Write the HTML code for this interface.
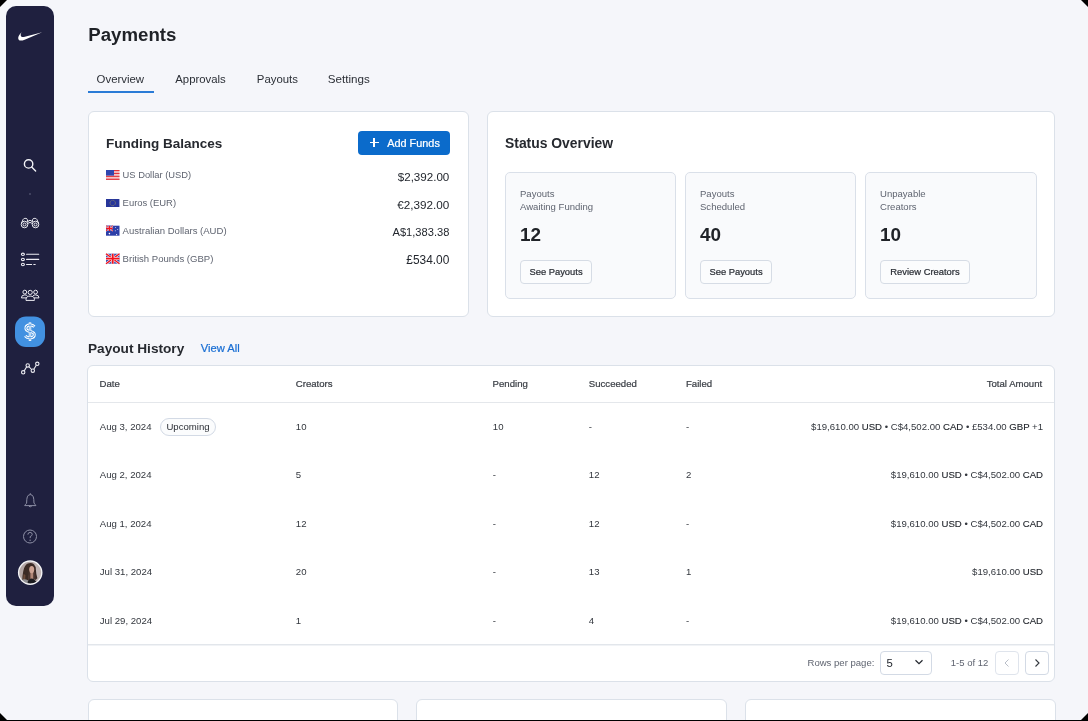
<!DOCTYPE html>
<html><head><meta charset="utf-8">
<style>
*{box-sizing:border-box;margin:0;padding:0}
html,body{width:1088px;height:721px;background:#000;overflow:hidden}
body{font-family:"Liberation Sans",sans-serif;color:#1f2328}
#page{will-change:transform;position:absolute;left:0;top:0;width:1088px;height:720px;background:#f5f6fa;overflow:hidden;clip-path:polygon(7px 0,1081px 0,1088px 7px,1088px 713px,1081px 720px,7px 720px,0 713px,0 7px)}
.abs{position:absolute}
.t{position:absolute;white-space:nowrap;line-height:1}
.t b{font-weight:700}
#side{position:absolute;left:6px;top:6px;width:48px;height:600px;background:#1f203f;border-radius:10px}
.card{position:absolute;background:#fff;border:1px solid #dbe1e9;border-radius:6px}
.sub{position:absolute;background:#f9fafc;border:1px solid #dae0e9;border-radius:5px;width:171px;height:127px;top:172px}
.btn2{position:absolute;background:#fff;border:1px solid #d6dce5;border-radius:4px;height:24px}
</style></head><body>
<div id="page">
<div id="side"></div>
<svg class="abs" style="left:0;top:0" width="60" height="610" viewBox="0 0 60 610">
<g transform="translate(18.2,24.4)"><path fill="#fff" d="M24 7.8L6.442 15.276c-1.456.616-2.679.925-3.668.925-1.12 0-1.933-.392-2.437-1.177-.317-.504-.41-1.143-.28-1.918.13-.775.476-1.6 1.036-2.478.467-.71 1.232-1.643 2.297-2.8a6.122 6.122 0 00-.784 1.848c-.28 1.195-.028 2.072.756 2.632.373.261.886.392 1.54.392.522 0 1.11-.084 1.764-.252L24 7.8z"/></g>
<g fill="none" stroke="#f2f2f6" stroke-width="1.4" stroke-linecap="round">
<circle cx="28.6" cy="163.9" r="4.2"/>
<path d="M31.7 167 L35.6 170.9"/>
</g>
<circle cx="30" cy="194" r="1" fill="#4b4d6a"/>
<g fill="none" stroke="#ececf2" stroke-width="1">
<circle cx="24.5" cy="224.5" r="3.3"/><circle cx="24.5" cy="224.5" r="1.5"/>
<circle cx="35.5" cy="224.5" r="3.3"/><circle cx="35.5" cy="224.5" r="1.5"/>
<path d="M21.4 223.3 L23.2 219.3 Q23.7 218.4 24.8 218.4 L25.9 218.4 Q27.1 218.5 27.4 219.6 L27.8 222"/>
<path d="M38.6 223.3 L36.8 219.3 Q36.3 218.4 35.2 218.4 L34.1 218.4 Q32.9 218.5 32.6 219.6 L32.2 222"/>
<path d="M27.6 221.6 L30 220.2 L32.4 221.6 M27.8 223.4 L30 222.4 L32.2 223.4"/>
</g>
<g fill="none" stroke="#ececf2" stroke-width="1.1" stroke-linecap="round">
<ellipse cx="22.9" cy="254.3" rx="1.5" ry="1.2"/>
<ellipse cx="22.9" cy="259.4" rx="1.5" ry="1.2"/>
<ellipse cx="22.9" cy="264.5" rx="1.5" ry="1.2"/>
<path d="M26.6 254.3 H38.7 M26.6 259.4 H38.7 M26.6 264.5 H31.6 M33.8 264.5 H35.2"/>
</g>
<g fill="none" stroke="#ececf2" stroke-width="1">
<circle cx="24.8" cy="292.1" r="1.9"/>
<circle cx="35.6" cy="292.1" r="1.9"/>
<circle cx="30.2" cy="292.4" r="2.1"/>
<path d="M21.4 297.9 Q21.4 294.9 24.8 294.9 Q26.4 294.9 27.3 295.8 M21.4 297.9 H26.2"/>
<path d="M39 297.9 Q39 294.9 35.6 294.9 Q34 294.9 33.1 295.8 M39 297.9 H34.2"/>
<path d="M26 300.4 V299.3 Q26 296.1 30.2 296.1 Q34.4 296.1 34.4 299.3 V300.4 Z"/>
</g>
<rect x="15" y="316.5" width="30" height="30.5" rx="11" fill="#4291e1"/>
<g fill="none" stroke-linecap="butt"><path d="M34.4 326.8 C33.3 325.5 31.8 325 30 325 C27.4 325 25.9 326.3 25.9 328.2 C25.9 330.4 28 331 30 331.4 C32.4 331.9 34.3 332.6 34.3 334.7 C34.3 336.8 32.5 337.8 30 337.8 C28 337.8 26.3 337.2 25.2 335.8" stroke="#fff" stroke-width="2.9"/><path d="M30 322.4 V341" stroke="#fff" stroke-width="2.5"/>
<path d="M34.4 326.8 C33.3 325.5 31.8 325 30 325 C27.4 325 25.9 326.3 25.9 328.2 C25.9 330.4 28 331 30 331.4 C32.4 331.9 34.3 332.6 34.3 334.7 C34.3 336.8 32.5 337.8 30 337.8 C28 337.8 26.3 337.2 25.2 335.8" stroke="#4291e1" stroke-width="1.0"/><path d="M30 323.3 V340.1" stroke="#4291e1" stroke-width="0.7"/></g>
<g fill="none" stroke="#ececf2" stroke-width="1.1">
<circle cx="23.2" cy="372.3" r="1.7"/>
<circle cx="27.7" cy="365.4" r="1.7"/>
<circle cx="32.8" cy="370.7" r="1.7"/>
<circle cx="37.3" cy="363.8" r="1.7"/>
<path d="M24.2 370.9 L26.7 366.8 M28.9 366.6 L31.6 369.5 M33.8 369.3 L36.3 365.3"/>
</g>
<g fill="none" stroke="#8d8fa5" stroke-width="1">
<path d="M30.3 493.2 V494.5 M26.6 503.3 Q26.7 498.5 27.3 496.9 Q28.1 494.6 30.3 494.6 Q32.5 494.6 33.3 496.9 Q33.9 498.5 34 503.3 Q35.9 504.9 35.9 505.6 H24.7 Q24.7 504.9 26.6 503.3 Z M28.9 506.2 Q30.3 507.4 31.7 506.2"/>
<circle cx="30" cy="536.5" r="6.5"/>
<path d="M27.9 534.6 Q27.9 532.4 30.1 532.4 Q32.2 532.4 32.2 534.4 Q32.2 535.7 30.2 536.6 L30.2 538.1"/>
</g>
<circle cx="30.1" cy="540.3" r="0.7" fill="#8d8fa5"/>
<defs><clipPath id="av"><circle cx="30.2" cy="572.6" r="11.3"/></clipPath></defs>
<g clip-path="url(#av)">
<rect x="18" y="560" width="25" height="25" fill="#b3a5a4"/>
<path d="M34 560 L43 560 L43 585 L38 585 Z" fill="#c2b6b5"/>
<path d="M22.5 586 Q21.8 578 23.3 571 Q24.4 565.2 27.8 563.6 Q31.2 562.4 33.8 564.2 Q35.9 566 35.9 569.8 Q36 574 37.4 578.2 L35.2 580 Q33.6 576 33.4 572.6 L29.2 572.6 Q28.6 579 27.4 586 Z" fill="#3b2a25"/>
<path d="M23.6 574 Q23 580 22.6 586 L25 586 Q25.2 580 25.4 575 Z" fill="#6b4a3a"/>
<path d="M28.6 572 L35 572 L35.6 579.5 L28 580 Z" fill="#4a3530"/><rect x="30.4" y="572" width="2.8" height="7" fill="#b08676"/><ellipse cx="31.7" cy="569.6" rx="2.5" ry="3.6" fill="#cda393"/>
<path d="M26.2 586 Q27.4 579.6 31 578.6 Q35.6 578.6 38.2 586 Z" fill="#1b1b1f"/>
<path d="M21 586 L22.6 579.4 Q25 578.6 28 580.2 L27.2 586 Z" fill="#8f8f93"/>
</g>
<circle cx="30.2" cy="572.6" r="11.6" fill="none" stroke="#f4f4f6" stroke-width="1.4"/>
</svg>
<div class="t" style="left:88.30px;top:26.00px;font-size:18.65px;font-weight:700;color:#1f2227;">Payments</div>
<div class="t" style="left:96.60px;top:74.00px;font-size:11.4px;font-weight:400;color:#2b2f36;">Overview</div>
<div class="t" style="left:175.30px;top:74.00px;font-size:11.35px;font-weight:400;color:#2b2f36;">Approvals</div>
<div class="t" style="left:256.80px;top:74.00px;font-size:11.4px;font-weight:400;color:#2b2f36;">Payouts</div>
<div class="t" style="left:327.80px;top:73.00px;font-size:11.6px;font-weight:400;color:#2b2f36;">Settings</div>
<div class="abs" style="left:88px;top:91px;width:66px;height:2px;background:#2a7bd6"></div>
<div class="card" style="left:88px;top:111px;width:381px;height:206px"></div>
<div class="t" style="left:106.00px;top:137.00px;font-size:13.5px;font-weight:700;color:#26292f;">Funding Balances</div>
<div class="abs" style="left:358px;top:131px;width:92px;height:24px;background:#0b6bcb;border-radius:4px"></div>
<div class="abs" style="left:369.5px;top:142px;width:9px;height:1.2px;background:#fff"></div>
<div class="abs" style="left:373.4px;top:138.1px;width:1.2px;height:9px;background:#fff"></div>
<div class="t" style="left:387.20px;top:138.00px;font-size:10.9px;font-weight:400;color:#ffffff;-webkit-text-stroke:0.22px currentColor;">Add Funds</div>
<div class="t" style="left:122.60px;top:171.00px;font-size:9.35px;font-weight:400;color:#5f6470;">US Dollar (USD)</div>
<div class="t" style="right:638.70px;top:171.00px;font-size:11.6px;font-weight:400;color:#23272e;">$2,392.00</div>
<div class="t" style="left:122.60px;top:198.00px;font-size:9.45px;font-weight:400;color:#5f6470;">Euros (EUR)</div>
<div class="t" style="right:638.70px;top:199.00px;font-size:11.7px;font-weight:400;color:#23272e;">€2,392.00</div>
<div class="t" style="left:122.60px;top:226.00px;font-size:9.55px;font-weight:400;color:#5f6470;">Australian Dollars (AUD)</div>
<div class="t" style="right:638.70px;top:227.00px;font-size:11.1px;font-weight:400;color:#23272e;">A$1,383.38</div>
<div class="t" style="left:122.60px;top:254.00px;font-size:9.55px;font-weight:400;color:#5f6470;">British Pounds (GBP)</div>
<div class="t" style="right:638.70px;top:255.00px;font-size:11.9px;font-weight:400;color:#23272e;">£534.00</div>
<svg class="abs" style="left:100px;top:165px" width="26" height="105" viewBox="100 165 26 105">
<!-- US -->
<rect x="106" y="170" width="13.5" height="10" fill="#f3c5c8"/>
<rect x="106" y="170" width="13.5" height="1.1" fill="#e1333c"/>
<rect x="106" y="172.9" width="13.5" height="1.1" fill="#e1333c"/>
<rect x="106" y="175.8" width="13.5" height="1.1" fill="#e1333c"/>
<rect x="106" y="178.7" width="13.5" height="1.2" fill="#e1333c"/>
<rect x="106" y="170" width="8" height="5.6" fill="#2f46b0"/>
<!-- EU -->
<rect x="106" y="199" width="13.4" height="8" fill="#27369a"/>
<circle cx="112.7" cy="203" r="2.7" fill="none" stroke="#b0a050" stroke-width="0.7" stroke-dasharray="0.8 0.6"/>
<!-- AU -->
<rect x="106" y="225.7" width="13.5" height="10" fill="#2c3ea8"/>
<rect x="106" y="225.7" width="6.8" height="5.2" fill="#3a4fb4"/>
<path d="M106 225.7 L112.8 230.9 M112.8 225.7 L106 230.9" stroke="#f0f0f8" stroke-width="1.2"/>
<path d="M106 225.7 L112.8 230.9 M112.8 225.7 L106 230.9" stroke="#f0101c" stroke-width="0.9"/>
<path d="M109.4 225.7 V230.9 M106 228.3 H112.8" stroke="#fff" stroke-width="1.6"/>
<path d="M109.4 225.7 V230.9 M106 228.3 H112.8" stroke="#f0101c" stroke-width="1.2"/>
<circle cx="109.4" cy="233.6" r="0.8" fill="#fff"/>
<circle cx="116.6" cy="234.6" r="0.6" fill="#fff"/>
<circle cx="115.6" cy="227.5" r="0.5" fill="#dfe3f5"/>
<circle cx="117.7" cy="229.4" r="0.5" fill="#dfe3f5"/>
<circle cx="115.3" cy="230.8" r="0.5" fill="#dfe3f5"/>
<!-- GB -->
<rect x="106" y="253.7" width="13.5" height="10" fill="#3d4fb0"/>
<path d="M106 253.7 L119.5 263.7 M119.5 253.7 L106 263.7" stroke="#f4f4fa" stroke-width="2.4"/>
<path d="M106 253.7 L119.5 263.7 M119.5 253.7 L106 263.7" stroke="#f2101c" stroke-width="1.4"/>
<path d="M112.75 253.7 V263.7 M106 258.7 H119.5" stroke="#fff" stroke-width="2.8"/>
<path d="M112.75 253.7 V263.7 M106 258.7 H119.5" stroke="#f2101c" stroke-width="1.8"/>
</svg>
<div class="card" style="left:486.6px;top:111px;width:568.4px;height:206px"></div>
<div class="t" style="left:505.00px;top:137.00px;font-size:13.9px;font-weight:700;color:#26292f;">Status Overview</div>
<div class="sub" style="left:505px;width:171px"></div>
<div class="t" style="left:520.00px;top:189.00px;font-size:9.55px;font-weight:400;color:#5f6470;">Payouts</div>
<div class="t" style="left:520.00px;top:202.00px;font-size:9.55px;font-weight:400;color:#5f6470;">Awaiting Funding</div>
<div class="t" style="left:520.00px;top:226.00px;font-size:18.9px;font-weight:700;color:#202328;">12</div>
<div class="btn2" style="left:520px;top:260px;width:72px;background:#fbfcfd"></div>
<div class="t" style="left:556.00px;transform:translateX(-50%);top:267.00px;font-size:9.4px;font-weight:400;color:#2b2f36;-webkit-text-stroke:0.22px currentColor;">See Payouts</div>
<div class="sub" style="left:685px;width:171px"></div>
<div class="t" style="left:700.00px;top:189.00px;font-size:9.55px;font-weight:400;color:#5f6470;">Payouts</div>
<div class="t" style="left:700.00px;top:202.00px;font-size:9.55px;font-weight:400;color:#5f6470;">Scheduled</div>
<div class="t" style="left:700.00px;top:226.00px;font-size:18.9px;font-weight:700;color:#202328;">40</div>
<div class="btn2" style="left:700px;top:260px;width:72px;background:#fbfcfd"></div>
<div class="t" style="left:736.00px;transform:translateX(-50%);top:267.00px;font-size:9.4px;font-weight:400;color:#2b2f36;-webkit-text-stroke:0.22px currentColor;">See Payouts</div>
<div class="sub" style="left:865px;width:172px"></div>
<div class="t" style="left:880.00px;top:189.00px;font-size:9.55px;font-weight:400;color:#5f6470;">Unpayable</div>
<div class="t" style="left:880.00px;top:202.00px;font-size:9.55px;font-weight:400;color:#5f6470;">Creators</div>
<div class="t" style="left:880.00px;top:226.00px;font-size:18.9px;font-weight:700;color:#202328;">10</div>
<div class="btn2" style="left:880px;top:260px;width:90px;background:#fbfcfd"></div>
<div class="t" style="left:925.00px;transform:translateX(-50%);top:267.00px;font-size:9.4px;font-weight:400;color:#2b2f36;-webkit-text-stroke:0.22px currentColor;">Review Creators</div>
<div class="t" style="left:88.00px;top:342.00px;font-size:13.65px;font-weight:700;color:#26292f;">Payout History</div>
<div class="t" style="left:200.70px;top:343.00px;font-size:11.2px;font-weight:400;color:#1a6fd4;-webkit-text-stroke:0.22px currentColor;">View All</div>
<div class="card" style="left:87px;top:365px;width:968px;height:317px"></div>
<div class="abs" style="left:88px;top:402px;width:966px;height:1px;background:#e4e7eb"></div>
<div class="abs" style="left:88px;top:644px;width:966px;height:1px;background:#e2e6eb"></div>
<div class="abs" style="left:88px;top:645px;width:966px;height:1px;background:#f1f3f6"></div>
<div class="t" style="left:99.50px;top:379.00px;font-size:9.6px;font-weight:400;color:#3b3f46;-webkit-text-stroke:0.22px currentColor;">Date</div>
<div class="t" style="left:295.80px;top:379.00px;font-size:9.6px;font-weight:400;color:#3b3f46;-webkit-text-stroke:0.22px currentColor;">Creators</div>
<div class="t" style="left:492.60px;top:379.00px;font-size:9.6px;font-weight:400;color:#3b3f46;-webkit-text-stroke:0.22px currentColor;">Pending</div>
<div class="t" style="left:588.80px;top:379.00px;font-size:9.6px;font-weight:400;color:#3b3f46;-webkit-text-stroke:0.22px currentColor;">Succeeded</div>
<div class="t" style="left:686.00px;top:379.00px;font-size:9.6px;font-weight:400;color:#3b3f46;-webkit-text-stroke:0.22px currentColor;">Failed</div>
<div class="t" style="right:45.80px;top:379.00px;font-size:9.6px;font-weight:400;color:#3b3f46;-webkit-text-stroke:0.22px currentColor;">Total Amount</div>
<div class="t" style="left:99.80px;top:422.00px;font-size:9.6px;font-weight:400;color:#33373e;">Aug 3, 2024</div>
<div class="t" style="left:295.80px;top:422.00px;font-size:9.6px;font-weight:400;color:#33373e;">10</div>
<div class="t" style="left:492.80px;top:422.00px;font-size:9.6px;font-weight:400;color:#33373e;">10</div>
<div class="t" style="left:588.80px;top:422.00px;font-size:9.6px;font-weight:400;color:#33373e;">-</div>
<div class="t" style="left:686.00px;top:422.00px;font-size:9.6px;font-weight:400;color:#33373e;">-</div>
<div class="t" style="right:45.00px;top:422.00px;font-size:9.6px;font-weight:400;color:#33373e;">$19,610.00 <span style="color:#22262c;-webkit-text-stroke:0.12px currentColor">USD</span> • C$4,502.00 <span style="color:#22262c;-webkit-text-stroke:0.12px currentColor">CAD</span> • £534.00 <span style="color:#22262c;-webkit-text-stroke:0.12px currentColor">GBP</span> +1</div>
<div class="t" style="left:99.80px;top:470.00px;font-size:9.6px;font-weight:400;color:#33373e;">Aug 2, 2024</div>
<div class="t" style="left:295.80px;top:470.00px;font-size:9.6px;font-weight:400;color:#33373e;">5</div>
<div class="t" style="left:492.80px;top:470.00px;font-size:9.6px;font-weight:400;color:#33373e;">-</div>
<div class="t" style="left:588.80px;top:470.00px;font-size:9.6px;font-weight:400;color:#33373e;">12</div>
<div class="t" style="left:686.00px;top:470.00px;font-size:9.6px;font-weight:400;color:#33373e;">2</div>
<div class="t" style="right:45.00px;top:470.00px;font-size:9.6px;font-weight:400;color:#33373e;">$19,610.00 <span style="color:#22262c;-webkit-text-stroke:0.12px currentColor">USD</span> • C$4,502.00 <span style="color:#22262c;-webkit-text-stroke:0.12px currentColor">CAD</span></div>
<div class="t" style="left:99.80px;top:519.00px;font-size:9.6px;font-weight:400;color:#33373e;">Aug 1, 2024</div>
<div class="t" style="left:295.80px;top:519.00px;font-size:9.6px;font-weight:400;color:#33373e;">12</div>
<div class="t" style="left:492.80px;top:519.00px;font-size:9.6px;font-weight:400;color:#33373e;">-</div>
<div class="t" style="left:588.80px;top:519.00px;font-size:9.6px;font-weight:400;color:#33373e;">12</div>
<div class="t" style="left:686.00px;top:519.00px;font-size:9.6px;font-weight:400;color:#33373e;">-</div>
<div class="t" style="right:45.00px;top:519.00px;font-size:9.6px;font-weight:400;color:#33373e;">$19,610.00 <span style="color:#22262c;-webkit-text-stroke:0.12px currentColor">USD</span> • C$4,502.00 <span style="color:#22262c;-webkit-text-stroke:0.12px currentColor">CAD</span></div>
<div class="t" style="left:99.80px;top:567.00px;font-size:9.6px;font-weight:400;color:#33373e;">Jul 31, 2024</div>
<div class="t" style="left:295.80px;top:567.00px;font-size:9.6px;font-weight:400;color:#33373e;">20</div>
<div class="t" style="left:492.80px;top:567.00px;font-size:9.6px;font-weight:400;color:#33373e;">-</div>
<div class="t" style="left:588.80px;top:567.00px;font-size:9.6px;font-weight:400;color:#33373e;">13</div>
<div class="t" style="left:686.00px;top:567.00px;font-size:9.6px;font-weight:400;color:#33373e;">1</div>
<div class="t" style="right:45.00px;top:567.00px;font-size:9.6px;font-weight:400;color:#33373e;">$19,610.00 <span style="color:#22262c;-webkit-text-stroke:0.12px currentColor">USD</span></div>
<div class="t" style="left:99.80px;top:616.00px;font-size:9.6px;font-weight:400;color:#33373e;">Jul 29, 2024</div>
<div class="t" style="left:295.80px;top:616.00px;font-size:9.6px;font-weight:400;color:#33373e;">1</div>
<div class="t" style="left:492.80px;top:616.00px;font-size:9.6px;font-weight:400;color:#33373e;">-</div>
<div class="t" style="left:588.80px;top:616.00px;font-size:9.6px;font-weight:400;color:#33373e;">4</div>
<div class="t" style="left:686.00px;top:616.00px;font-size:9.6px;font-weight:400;color:#33373e;">-</div>
<div class="t" style="right:45.00px;top:616.00px;font-size:9.6px;font-weight:400;color:#33373e;">$19,610.00 <span style="color:#22262c;-webkit-text-stroke:0.12px currentColor">USD</span> • C$4,502.00 <span style="color:#22262c;-webkit-text-stroke:0.12px currentColor">CAD</span></div>
<div class="abs" style="left:160px;top:418px;width:56px;height:18px;border:1px solid #d3dae5;border-radius:9px;background:#fbfcfd"></div>
<div class="t" style="left:188.00px;transform:translateX(-50%);top:422.00px;font-size:9.6px;font-weight:400;color:#2b2f36;">Upcoming</div>
<div class="t" style="left:807.50px;top:658.00px;font-size:9.55px;font-weight:400;color:#5f6470;">Rows per page:</div>
<div class="btn2" style="left:880px;top:651px;width:52px;height:24px;border-color:#d3dae5"></div>
<div class="t" style="left:886.50px;top:658.00px;font-size:11.3px;font-weight:400;color:#23272e;">5</div>
<svg class="abs" style="left:914px;top:658px" width="10" height="8" viewBox="0 0 10 8"><path d="M1.5 2.2 L5 5.6 L8.5 2.2" fill="none" stroke="#23272e" stroke-width="1.25"/></svg>
<div class="t" style="left:950.80px;top:658.00px;font-size:9.5px;font-weight:400;color:#5f6470;">1-5 of 12</div>
<div class="btn2" style="left:995px;top:651px;width:24px;height:24px;border-color:#dfe4ec"></div>
<div class="btn2" style="left:1025px;top:651px;width:24px;height:24px;border-color:#d3dae5"></div>
<svg class="abs" style="left:995px;top:651px" width="24" height="24" viewBox="0 0 24 24"><path d="M13.5 8.5 L10 12 L13.5 15.5" fill="none" stroke="#b9bec8" stroke-width="1"/></svg>
<svg class="abs" style="left:1025px;top:651px" width="24" height="24" viewBox="0 0 24 24"><path d="M10.5 8.5 L14 12 L10.5 15.5" fill="none" stroke="#33373e" stroke-width="1.1"/></svg>
<div class="card" style="left:88px;top:699px;width:310px;height:60px;border-radius:6px"></div>
<div class="card" style="left:416px;top:699px;width:311px;height:60px;border-radius:6px"></div>
<div class="card" style="left:745px;top:699px;width:311px;height:60px;border-radius:6px"></div>
</div>
</body></html>
